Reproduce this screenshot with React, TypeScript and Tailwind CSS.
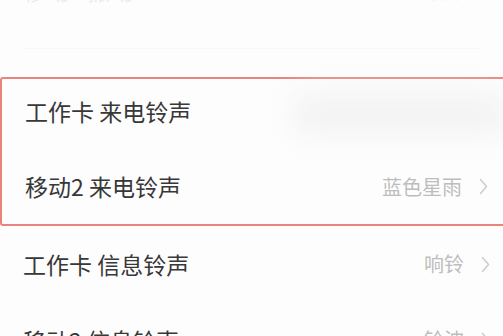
import React from 'react';

const font = { fontFamily: '"Noto Sans CJK SC", "Noto Sans", sans-serif' };

function Chevron() {
  return (
    <svg width="9" height="17" viewBox="0 0 9 17" fill="none" className="shrink-0">
      <polyline points="1.5,1.5 7.5,8.5 1.5,15.5" stroke="#cccccc" strokeWidth="1.5" strokeLinecap="round" strokeLinejoin="round" />
    </svg>
  );
}

type RowProps = { label: string; value?: string; blurred?: boolean; className: string };

function Row({ label, value, blurred, className }: RowProps) {
  return (
    <div className={`relative flex items-center justify-between pl-[23px] pr-[13px] ${className}`}>
      <span className="text-[23px] leading-none text-[#383838]">{label}</span>
      {blurred ? (
        <div className="absolute right-0 top-[12px] h-[46px] w-[215px] rounded-xl bg-[#f4f4f4] blur-md" />
      ) : (
        <div className="flex items-center gap-[17px]">
          <span className="text-[20px] leading-none text-[#bdbdbd]">{value}</span>
          <Chevron />
        </div>
      )}
    </div>
  );
}

export default function App() {
  return (
    <div className="h-[336px] w-[503px] overflow-hidden bg-[#fdfdfd]" style={font}>
      {/* top row, mostly scrolled out of view */}
      <div className="h-[77px] flex flex-col">
        <div className="flex h-[49px] justify-between border-b border-[#f7f7f7] mx-[23px]">
          <span className="-mt-[21px] text-[23px] leading-none text-[#ededed]">移动2 振动</span>
          <span className="-mt-[19px] mr-[20px] text-[20px] leading-none text-[#f0f0f0]">开启</span>
        </div>
      </div>

      {/* highlighted block */}
      <div className="w-[510px] rounded-[3px] border-2 border-[#e8847c]">
        <Row label="工作卡 来电铃声" blurred className="h-[70px] pb-[6px]" />
        <Row label="移动2 来电铃声" value="蓝色星雨" className="h-[75px] pr-[20px]" />
      </div>

      <Row label="工作卡 信息铃声" value="响铃" className="h-[76px]" />
      <Row label="移动2 信息铃声" value="铃波" className="h-[76px]" />
    </div>
  );
}
